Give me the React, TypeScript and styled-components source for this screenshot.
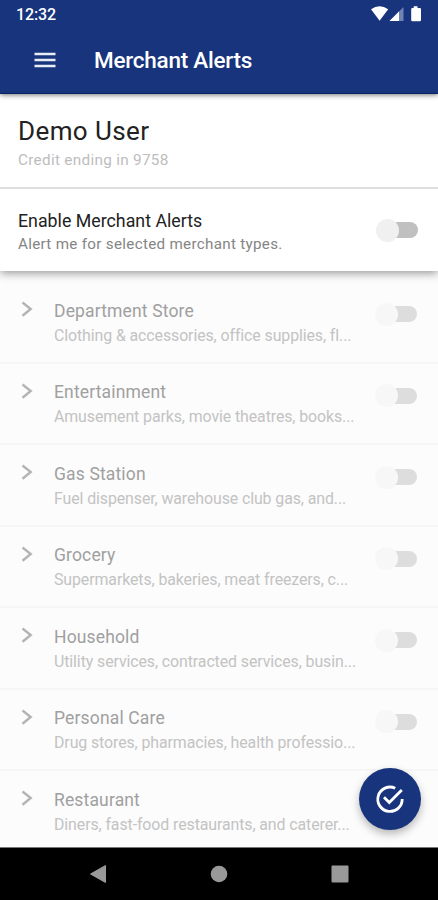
import React from "react";
import styled, { createGlobalStyle } from "styled-components";

const Global = createGlobalStyle`
  * { box-sizing: border-box; }
  body { margin: 0; background: #000; }
`;

const Screen = styled.div`
  width: 438px;
  height: 900px;
  display: flex;
  flex-direction: column;
  overflow: hidden;
  background: #fcfcfc;
  font-family: Roboto, "Liberation Sans", sans-serif;
  position: relative;
`;

const Header = styled.header`
  flex: none;
  height: 94px;
  background: #17347c;
  border-bottom: 1px solid #0a2264;
  box-shadow: 0 1px 5px rgba(0, 0, 0, 0.55);
  color: #fff;
  z-index: 3;
`;

const StatusBar = styled.div`
  height: 28px;
  padding: 1px 14px 0 16px;
  display: flex;
  align-items: center;
  justify-content: space-between;

  & > svg {
    margin-top: -1px;
  }
`;

const Clock = styled.span`
  font-size: 16px;
  font-weight: 500;
  line-height: 28px;
  letter-spacing: -0.15px;
`;

const AppBar = styled.div`
  height: 65px;
  display: flex;
  align-items: center;
  padding: 0 0 1px 34px;
  gap: 38px;
`;

const Title = styled.h1`
  margin: 0;
  font-size: 22.5px;
  font-weight: 500;
  line-height: 30px;
  letter-spacing: -0.24px;
`;

const Account = styled.section`
  flex: none;
  height: 95px;
  padding: 21px 18px 0;
  background: #fff;
  border-bottom: 2px solid #dedede;
  position: relative;
  z-index: 2;
`;

const AccountName = styled.div`
  font-size: 26px;
  line-height: 32px;
  letter-spacing: 0.4px;
  color: #222;
`;

const AccountNote = styled.div`
  margin-top: 3px;
  font-size: 15.3px;
  line-height: 20px;
  letter-spacing: 0.3px;
  color: #bdbdbd;
`;

const Master = styled.section`
  flex: none;
  height: 82px;
  padding: 3px 20.5px 0 18px;
  background: #fff;
  display: flex;
  align-items: center;
  justify-content: space-between;
  box-shadow: 0 2px 9px rgba(0, 0, 0, 0.42);
  z-index: 1;
`;

const MasterTitle = styled.div`
  font-size: 17.8px;
  line-height: 24px;
  letter-spacing: 0;
  color: #222;
`;

const MasterNote = styled.div`
  font-size: 15.2px;
  line-height: 22px;
  letter-spacing: 0.3px;
  color: #858585;
`;

const Switch = styled.span<{ $faded?: boolean }>`
  flex: none;
  width: 42px;
  height: 24px;
  display: flex;
  align-items: center;
  opacity: ${(p) => (p.$faded ? 0.5 : 1)};

  &::before {
    content: "";
    width: 23px;
    height: 23px;
    border-radius: 50%;
    background: ${(p) => (p.$faded ? "#f4f4f4" : "#f0f0f0")};
    z-index: 1;
  }

  &::after {
    content: "";
    width: 30px;
    height: 16px;
    margin-left: -11px;
    border-radius: 8px;
    background: #c0c0c0;
  }
`;

const MasterSwitch = styled.div`
  margin-top: -3px;
`;

const List = styled.main`
  flex: 1;
  min-height: 0;
  overflow: hidden;
  padding-top: 11.3px;
`;

const Row = styled.div`
  height: 81.5px;
  padding: 15px 21px 0 20px;
  display: flex;
  border-bottom: 2px solid #f6f6f6;

  & > svg {
    flex: none;
    margin-top: 2px;
  }
`;

const RowText = styled.div`
  flex: 1;
  min-width: 0;
  margin: 0.5px 0 0 20px;
`;

const RowTitle = styled.div`
  font-size: 17.5px;
  line-height: 26px;
  letter-spacing: 0.15px;
  color: #a0a0a0;
`;

const RowNote = styled.div`
  font-size: 15.9px;
  line-height: 24px;
  white-space: nowrap;
  letter-spacing: -0.09px;
  color: #c3c3c3;
`;

const RowSwitch = styled.div`
  width: 42px;
  padding-top: 5px;
`;

const Fab = styled.button`
  position: absolute;
  left: 359px;
  top: 768px;
  width: 62px;
  height: 62px;
  padding: 0;
  border: 0;
  border-radius: 50%;
  background: #17347c;
  box-shadow: 0 4px 8px rgba(0, 0, 0, 0.28);
  display: flex;
  align-items: center;
  justify-content: center;
  z-index: 4;
`;

const NavBar = styled.nav`
  flex: none;
  height: 53px;
  padding: 0 89px;
  background: #000;
  border-top: 1px solid #777;
  display: flex;
  align-items: center;
  justify-content: space-between;
`;

const categories = [
  { name: "Department Store", note: "Clothing & accessories, office supplies, fl..." },
  { name: "Entertainment", note: "Amusement parks, movie theatres, books..." },
  { name: "Gas Station", note: "Fuel dispenser, warehouse club gas, and..." },
  { name: "Grocery", note: "Supermarkets, bakeries, meat freezers, c..." },
  { name: "Household", note: "Utility services, contracted services, busin..." },
  { name: "Personal Care", note: "Drug stores, pharmacies, health professio..." },
  { name: "Restaurant", note: "Diners, fast-food restaurants, and caterer..." },
];

export default function App() {
  return (
    <>
      <Global />
      <Screen>
        <Header>
          <StatusBar>
            <Clock>12:32</Clock>
            <svg width="54" height="18" viewBox="0 0 54 18">
              <path d="M1 4.2Q9.5-1.5 18.2 4.2L9.6 15.7Z" fill="#fff" />
              <path d="M33.5 2V16H19.5Z" fill="#7083b3" />
              <path d="M29 6.5V16H19.5Z" fill="#fff" />
              <path d="M43.7 1.3h3.8v1.6h2.3q1.2 0 1.2 1.2V15q0 1.2-1.2 1.2h-7.400q-1.2 0-1.2-1.2V4.1q0-1.2 1.2-1.2h1.3z" fill="#fff" />
            </svg>
          </StatusBar>
          <AppBar>
            <svg width="22" height="16" viewBox="0 0 22 16">
              <path d="M0.5 2h21M0.5 8h21M0.5 14h21" stroke="#e8ecf5" strokeWidth="2.6" />
            </svg>
            <Title>Merchant Alerts</Title>
          </AppBar>
        </Header>
        <Account>
          <AccountName>Demo User</AccountName>
          <AccountNote>Credit ending in 9758</AccountNote>
        </Account>
        <Master>
          <div>
            <MasterTitle>Enable Merchant Alerts</MasterTitle>
            <MasterNote>Alert me for selected merchant types.</MasterNote>
          </div>
          <MasterSwitch>
            <Switch />
          </MasterSwitch>
        </Master>
        <List>
          {categories.map((c) => (
            <Row key={c.name}>
              <svg width="14" height="20" viewBox="0 0 14 20">
                <path d="M2.5 3.5L10.7 10L2.5 16.7" fill="none" stroke="#b4b4b4" strokeWidth="2.4" />
              </svg>
              <RowText>
                <RowTitle>{c.name}</RowTitle>
                <RowNote>{c.note}</RowNote>
              </RowText>
              <RowSwitch>
                <Switch $faded />
              </RowSwitch>
            </Row>
          ))}
        </List>
        <NavBar>
          <svg width="18" height="20" viewBox="0 0 18 20">
            <path d="M1.5 10L16.5 1.5v17z" fill="#999" stroke="#999" strokeLinejoin="round" />
          </svg>
          <svg width="18" height="18" viewBox="0 0 18 18">
            <circle cx="9" cy="9" r="8.3" fill="#999" />
          </svg>
          <svg width="18" height="18" viewBox="0 0 18 18">
            <rect x="0.5" y="0.5" width="17" height="17" rx="1" fill="#999" />
          </svg>
        </NavBar>
        <Fab aria-label="Save">
          <svg width="30" height="30" viewBox="0 0 30 30" fill="none" stroke="#fff" strokeWidth="2.8">
            <path d="M20.2 4.2A12.2 12.2 0 1 0 27.2 15" />
            <path d="M9 13.2L14.3 18.6L26.8 6" />
          </svg>
        </Fab>
      </Screen>
    </>
  );
}
